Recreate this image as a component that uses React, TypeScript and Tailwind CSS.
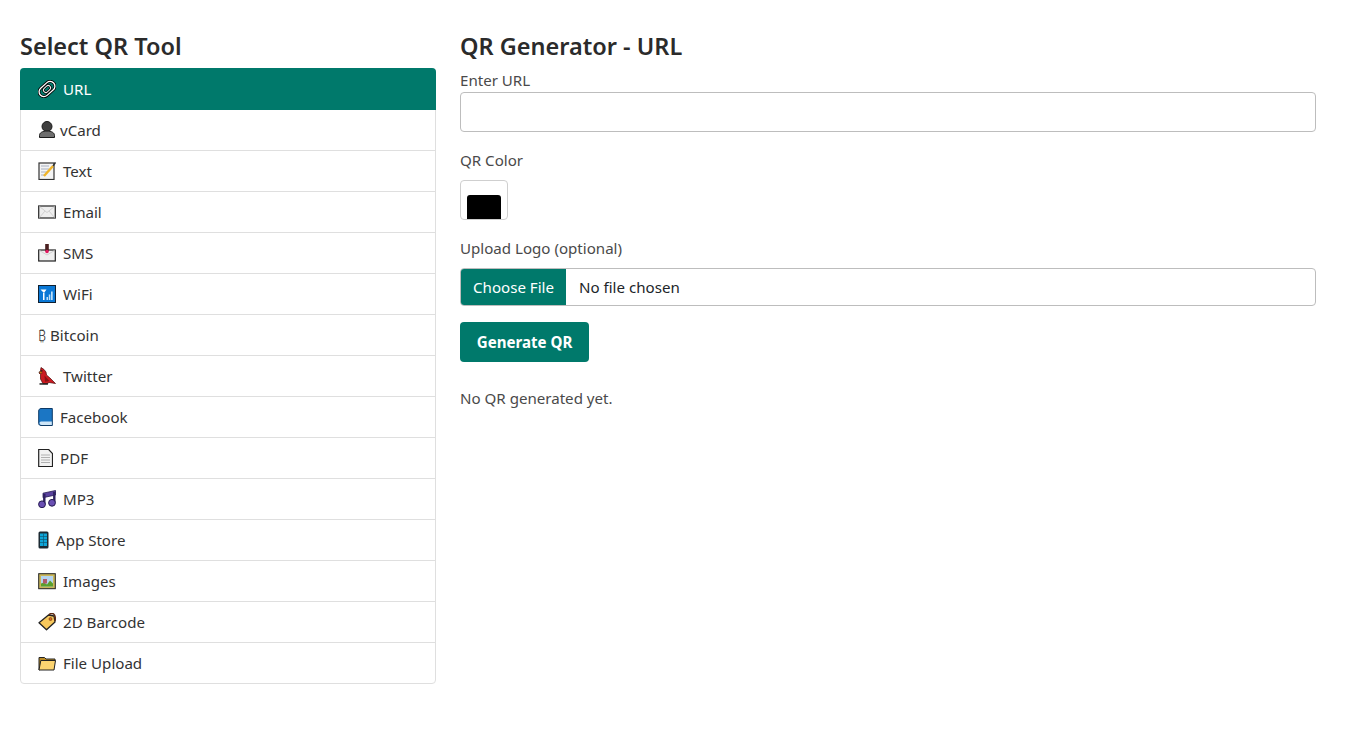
import React from "react";

const S = ({ children, w = 18 }: { children: React.ReactNode; w?: number }) => (
  <svg width={w} height="18" viewBox={`0 0 ${w} 18`} className="shrink-0 block">{children}</svg>
);

const LinkIcon = () => (
  <S>
    <g transform="rotate(-42 9 9)" fill="none">
      <rect x="0" y="4.200" width="18" height="9.600" rx="4.800" stroke="#000" strokeWidth="3" />
      <rect x="0" y="4.200" width="18" height="9.600" rx="4.800" stroke="#fff" strokeWidth="1.300" />
      <rect x="5" y="6.600" width="8" height="4.800" rx="2.400" stroke="#000" strokeWidth="2.600" />
      <rect x="5" y="6.600" width="8" height="4.800" rx="2.400" stroke="#f0f0f0" strokeWidth="1" />
    </g>
  </S>
);
const Person = () => (
  <S>
    <circle cx="9" cy="5.500" r="5" fill="#3f3f3f" stroke="#1a1a1a" />
    <path d="M1.500 16.500v-2c0-2.800 3-4.500 7.500-4.500s7.500 1.700 7.500 4.500v2z" fill="#6e6e6e" stroke="#1a1a1a" />
  </S>
);
const Memo = () => (
  <S>
    <rect x="1" y="1" width="15" height="16.500" fill="#f4f4f4" stroke="#333" strokeWidth="1.200" />
    <path d="M3 4h8M3 7h8M3 10h6M3 13h4" stroke="#a8b0c0" strokeWidth="1" />
    <path d="M6 14 15 4" stroke="#f0b429" strokeWidth="2.400" />
    <path d="M15 4 17.500 .5" stroke="#333" strokeWidth="1.400" />
  </S>
);
const Envelope = () => (
  <S>
    <rect x=".7" y="3" width="16.600" height="12" fill="#eeeeee" stroke="#333" strokeWidth="1.300" />
    <path d="M1.500 3.500 9 9.500l7.500-6M1.500 14.500 7 8M16.500 14.500 11 8" fill="none" stroke="#d0d0d0" />
  </S>
);
const Outbox = () => (
  <S>
    <rect x=".7" y="6" width="16.600" height="11" fill="#eeeeee" stroke="#222" strokeWidth="1.200" />
    <path d="M1.500 6.500 9 11l7.500-4.500" fill="none" stroke="#d0d0d0" />
    <rect x="7.200" y="0" width="3.600" height="7" fill="#4a2020" />
    <circle cx="9" cy="7.500" r="1.800" fill="#e0195f" />
  </S>
);
const Signal = () => (
  <S>
    <rect x=".5" y=".5" width="17" height="17" fill="#0a78d6" stroke="#102030" />
    <path d="M2.500 4.500h6L6 8zM5 8h1.500v7H5z" fill="#fff" />
    <path d="M8.500 12h1.500v3H8.500zM10.800 9.500h1.500V15h-1.500zM13 6.500h1.700V15H13z" fill="#bfe0f8" />
  </S>
);
const Cardinal = () => (
  <S>
    <path d="M3 .5 6 2.500 8 5l.5 3 3.500 3 5.500 5.500-6.500-1-2 1.200H5L2.500 12 2.500 7.500 1 6 2.500 3.500z" fill="#cc1a20" stroke="#4a0a0a" strokeWidth=".7" strokeLinejoin="round" />
    <path d="M6.500 8.500l5 5.500-4.500.8z" fill="#8a1116" />
    <path d="M.8 5.300 3.500 4.300 4 6.800z" fill="#f59e0b" stroke="#222" strokeWidth=".4" />
    <path d="M2 3.500 4.600 3.200 4.200 4.800z" fill="#1a1a1a" />
    <path d="M1.500 16.200h8.500v1.500H1.500z" fill="#1f1f1f" />
  </S>
);
const Book = () => (
  <S w={15}>
    <path d="M.7 3c0-1.500 1-2.500 2.300-2.500h11.300V17.500H3C1.700 17.500.7 16.700.7 15.500z" fill="#1b76c4" stroke="#0d3a66" />
    <path d="M1.500 15c0-1 1-1.500 2-1.500h10.300v3.500H3.500c-1 0-2-1-2-2z" fill="#cfe6f7" />
  </S>
);
const Page = () => (
  <S w={15}>
    <path d="M.7.500h10l3.800 4v13H.7z" fill="#f2f2f2" stroke="#222" strokeWidth="1.200" />
    <path d="M3 6h9M3 8.500h9M3 11h9M3 13.500h9" stroke="#b0b0b0" />
  </S>
);
const Notes = () => (
  <S>
    <path d="M5 3.200 17.500.5v4.500L5 7.700z" fill="#5a429e" stroke="#241a50" strokeWidth=".8" />
    <path d="M6.300 4v10.500M16.300 2v10.500" stroke="#2e2260" strokeWidth="2.400" />
    <circle cx="4" cy="14.300" r="3.400" fill="#6a4fb3" stroke="#241a50" />
    <circle cx="14" cy="12.800" r="3.400" fill="#6a4fb3" stroke="#241a50" />
  </S>
);
const Phone = () => (
  <S w={11}>
    <rect x=".5" y=".5" width="10" height="17" rx="1.500" fill="#1c2a33" />
    <rect x="2" y="2.500" width="7" height="12.500" fill="#0ea5d8" />
    <path d="M2 5.500h7M2 8.500h7M2 11.500h7M5.500 2.500V15" stroke="#0b5a78" strokeWidth=".7" />
  </S>
);
const Picture = () => (
  <S>
    <rect x=".7" y="1.700" width="16.600" height="15" fill="#c9b65a" stroke="#222" />
    <rect x="3" y="4" width="12" height="10.500" fill="#b4d4f0" />
    <path d="M3 14.500v-3l3-1 3 2 3-4 3 3v3z" fill="#5aa02c" />
    <rect x="5" y="7" width="4" height="4.500" fill="#b05a6a" />
  </S>
);
const Tag = () => (
  <S>
    <path d="M10.500 2 16 3 17 9 8.500 16.700 1 9.800z" fill="#f7c85c" stroke="#222" strokeWidth="1.300" strokeLinejoin="round" />
    <circle cx="12.500" cy="6" r="1.500" fill="#d9691e" stroke="#6b3410" strokeWidth=".6" />
    <path d="M11 1.800C12.500 0 15.500 0 16.500 2s1 4 .5 6" fill="none" stroke="#5c2a14" strokeWidth="1.500" />
  </S>
);
const Folder = () => (
  <S>
    <path d="M1 16V3.500h5.500L8 5h9v2.500z" fill="#b98a24" stroke="#222" />
    <path d="M1 16 2.800 6.500H17.500L16 16z" fill="#fcd470" stroke="#222" strokeLinejoin="round" />
  </S>
);

const tools: { icon: React.ReactNode; label: string; gap: string }[] = [
  { icon: <Person />, label: "vCard", gap: "ml-[4px]" },
  { icon: <Memo />, label: "Text", gap: "ml-[7px]" },
  { icon: <Envelope />, label: "Email", gap: "ml-[7px]" },
  { icon: <Outbox />, label: "SMS", gap: "ml-[7px]" },
  { icon: <Signal />, label: "WiFi", gap: "ml-[7px]" },
  { icon: <span className="block w-[8px] text-[14px] font-light">₿</span>, label: "Bitcoin", gap: "ml-[4px]" },
  { icon: <Cardinal />, label: "Twitter", gap: "ml-[7px]" },
  { icon: <Book />, label: "Facebook", gap: "ml-[7px]" },
  { icon: <Page />, label: "PDF", gap: "ml-[7px]" },
  { icon: <Notes />, label: "MP3", gap: "ml-[7px]" },
  { icon: <Phone />, label: "App Store", gap: "ml-[7px]" },
  { icon: <Picture />, label: "Images", gap: "ml-[7px]" },
  { icon: <Tag />, label: "2D Barcode", gap: "ml-[7px]" },
  { icon: <Folder />, label: "File Upload", gap: "ml-[7px]" },
];

export default function App() {
  return (
    <div className="min-h-[742px] bg-white font-['Noto_Sans',sans-serif] text-[15.1px] text-[#4a4a4a] flex items-start gap-6 pl-5 pr-[31px] pt-[32px]">
      <aside className="w-[416px] shrink-0">
        <h2 className="text-[23.5px] leading-[29px] font-semibold text-[#2b2b2b] mb-[7px]">Select QR Tool</h2>
        <ul className="border border-[#dfdfdf] rounded-[4px]">
          <li className="-mx-px -mt-px h-[42px] rounded-t-[4px] bg-[#00796b] text-white flex items-center pl-[18px]">
            <LinkIcon />
            <span className="ml-[7px]">URL</span>
          </li>
          {tools.map((t) => (
            <li
              key={t.label}
              className="h-[41px] border-b last:border-b-0 last:h-[40px] border-[#dfdfdf] flex items-center pl-[17px] text-[#333]"
            >
              {t.icon}
              <span className={t.gap}>{t.label}</span>
            </li>
          ))}
        </ul>
      </aside>
      <main className="flex-1 min-w-0">
        <h2 className="text-[23.5px] leading-[29px] font-semibold text-[#2b2b2b] mb-[7px]">QR Generator - URL</h2>
        <div className="leading-[24px]">Enter URL</div>
        <div className="h-[40px] border border-[#bdbdbd] rounded-[4px] bg-white" />
        <div className="leading-[24px] mt-4">QR Color</div>
        <div className="w-[48px] h-[40px] mt-2 border border-[#cfcfcf] rounded-[4px] bg-white flex items-end px-[6px]">
          <div className="w-[34px] h-[24px] bg-black rounded-t-[3px]" />
        </div>
        <div className="leading-[24px] mt-4">Upload Logo (optional)</div>
        <div className="h-[38px] mt-2 border border-[#bdbdbd] rounded-[4px] overflow-hidden flex items-center text-[#212529]">
          <div className="w-[105px] h-full bg-[#00796b] text-white flex items-center justify-center">Choose File</div>
          <span className="ml-[13px]">No file chosen</span>
        </div>
        <div className="mt-4 w-[129px] h-[40px] rounded-[4px] bg-[#00796b] text-white font-bold flex items-center justify-center">Generate QR</div>
        <p className="mt-6 leading-[24px]">No QR generated yet.</p>
      </main>
    </div>
  );
}
